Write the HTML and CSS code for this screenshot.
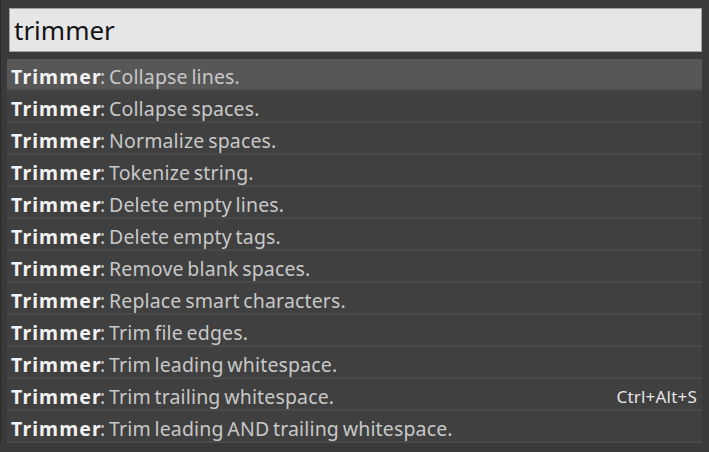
FILE: index.html
```html
<!DOCTYPE html>
<html>
<head>
<meta charset="utf-8">
<link rel="stylesheet" href="styles.css">
</head>
<body>
<div class="panel">
  <div class="search"><span class="query">trimmer</span></div>
  <ul class="list">
    <li class="item selected"><span class="label"><b>Trimmer</b>: Collapse lines.</span></li>
    <li class="item"><span class="label"><b>Trimmer</b>: Collapse spaces.</span></li>
    <li class="item"><span class="label"><b>Trimmer</b>: Normalize spaces.</span></li>
    <li class="item"><span class="label"><b>Trimmer</b>: Tokenize string.</span></li>
    <li class="item"><span class="label"><b>Trimmer</b>: Delete empty lines.</span></li>
    <li class="item"><span class="label"><b>Trimmer</b>: Delete empty tags.</span></li>
    <li class="item"><span class="label"><b>Trimmer</b>: Remove blank spaces.</span></li>
    <li class="item"><span class="label"><b>Trimmer</b>: Replace smart characters.</span></li>
    <li class="item"><span class="label"><b>Trimmer</b>: Trim file edges.</span></li>
    <li class="item"><span class="label"><b>Trimmer</b>: Trim leading whitespace.</span></li>
    <li class="item"><span class="label"><b>Trimmer</b>: Trim trailing whitespace.</span><span class="key">Ctrl+Alt+S</span></li>
    <li class="item"><span class="label"><b>Trimmer</b>: Trim leading AND trailing whitespace.</span></li>
  </ul>
</div>
</body>
</html>
```
FILE: styles.css
```css
html, body {
  margin: 0;
  padding: 0;
  background: #3a3a3a;
  width: 709px;
  height: 452px;
  overflow: hidden;
}
.panel {
  font-family: "Noto Sans", "Open Sans", sans-serif;
  padding: 8px 7px 0 6px;
  border-left: 1px solid #2a2a2a;
}
.search {
  height: 44px;
  margin-left: 2px;
  background: #e6e6e6;
  border: 1px solid #a0a0a0;
  box-sizing: border-box;
  display: flex;
  align-items: center;
  padding-left: 4px;
}
.query {
  font-size: 26px;
  color: #141414;
  line-height: 1;
}
.list {
  list-style: none;
  margin: 7px 0 0 0;
  padding: 0;
}
.item {
  height: 32px;
  box-sizing: border-box;
  background: #404040;
  border-bottom: 2px solid #4a4a4a;
  display: flex;
  align-items: center;
  justify-content: space-between;
  padding: 4px 5px 0 4px;
  font-size: 19.5px;
  letter-spacing: 0.15px;
  word-spacing: -1.5px;
  color: #c8c8c8;
  white-space: nowrap;
}
.item b {
  color: #f2f2f2;
  font-weight: 700;
  letter-spacing: 1.1px;
  margin-right: -2px;
}
.item.selected {
  background: #575757;
}
.key {
  font-size: 17px;
  letter-spacing: 0.2px;
  word-spacing: 0;
  color: #e6e6e6;
}
```
